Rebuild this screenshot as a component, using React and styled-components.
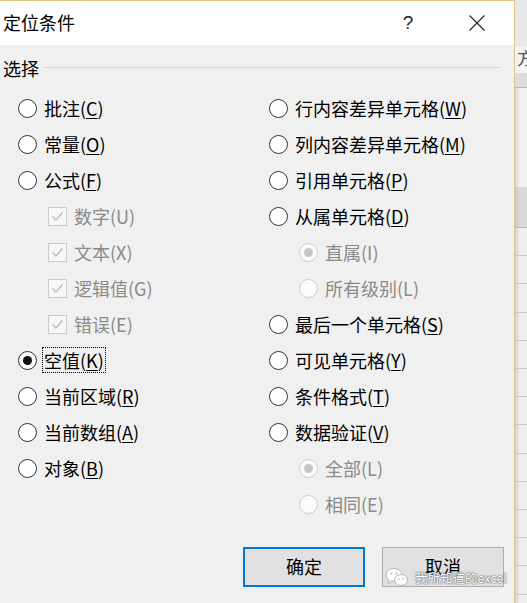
import React from "react";
import styled, { createGlobalStyle } from "styled-components";

const GlobalStyle = createGlobalStyle`
  html, body {
    margin: 0;
    padding: 0;
    background: #f0f0f0;
    font-family: "Noto Sans CJK SC", "Noto Sans", sans-serif;
  }
`;

const leftItems = [
  { label: "批注", key: "C" },
  { label: "常量", key: "O" },
  { label: "公式", key: "F" },
  { label: "数字", key: "U", sub: "check" },
  { label: "文本", key: "X", sub: "check" },
  { label: "逻辑值", key: "G", sub: "check" },
  { label: "错误", key: "E", sub: "check" },
  { label: "空值", key: "K", checked: true, focus: true },
  { label: "当前区域", key: "R" },
  { label: "当前数组", key: "A" },
  { label: "对象", key: "B" },
];

const rightItems = [
  { label: "行内容差异单元格", key: "W" },
  { label: "列内容差异单元格", key: "M" },
  { label: "引用单元格", key: "P" },
  { label: "从属单元格", key: "D" },
  { label: "直属", key: "I", sub: "radio", checked: true },
  { label: "所有级别", key: "L", sub: "radio" },
  { label: "最后一个单元格", key: "S" },
  { label: "可见单元格", key: "Y" },
  { label: "条件格式", key: "T" },
  { label: "数据验证", key: "V" },
  { label: "全部", key: "L", sub: "radio", checked: true },
  { label: "相同", key: "E", sub: "radio" },
];

function Option({ item }) {
  const disabled = !!item.sub;
  return (
    <Row $indent={disabled}>
      {item.sub === "check" ? (
        <CheckBox>
          <svg width="17" height="17" viewBox="0 0 17 17">
            <path d="M3.5 8.5 L7 12 L13.5 4.5" fill="none" stroke="#bdbdbd" strokeWidth="1.4" />
          </svg>
        </CheckBox>
      ) : (
        <Radio $disabled={disabled}>{item.checked && <Dot $disabled={disabled} />}</Radio>
      )}
      <Label $disabled={disabled} $focus={item.focus}>
        {item.label}(
        {disabled ? item.key : <u>{item.key}</u>})
      </Label>
    </Row>
  );
}

function WeChatMark() {
  return (
    <Watermark>
      <svg width="24" height="21" viewBox="0 0 24 21">
        <ellipse cx="9" cy="8" rx="8" ry="6.5" fill="#fff" stroke="#b5b5b5" strokeWidth="1" />
        <path d="M4 13 L3 16.5 L7.5 14" fill="#fff" stroke="#b5b5b5" strokeWidth="1" />
        <ellipse cx="16" cy="13" rx="6.5" ry="5.5" fill="#fff" stroke="#b5b5b5" strokeWidth="1" />
        <path d="M19.5 17.5 L21 20 L17 18.3" fill="#fff" stroke="#b5b5b5" strokeWidth="1" />
        <circle cx="6.5" cy="6.5" r="1" fill="#b5b5b5" />
        <circle cx="11.5" cy="6.5" r="1" fill="#b5b5b5" />
        <circle cx="14" cy="12" r="0.8" fill="#b5b5b5" />
        <circle cx="18" cy="12" r="0.8" fill="#b5b5b5" />
      </svg>
      <span>我所知道的excel</span>
    </Watermark>
  );
}

export default function App() {
  return (
    <>
      <GlobalStyle />
      <Screen>
        <Dialog>
          <TitleBar>
            <Title>定位条件</Title>
            <Help>?</Help>
            <Close>
              <svg width="16" height="16" viewBox="0 0 16 16">
                <path d="M0.5 0.5 L15.5 15.5 M15.5 0.5 L0.5 15.5" stroke="#222" strokeWidth="1.1" />
              </svg>
            </Close>
          </TitleBar>
          <Body>
            <Legend>
              <span>选择</span>
              <Rule />
            </Legend>
            <Columns>
              <Column>
                {leftItems.map((it, i) => (
                  <Option key={i} item={it} />
                ))}
              </Column>
              <Column>
                {rightItems.map((it, i) => (
                  <Option key={i} item={it} />
                ))}
              </Column>
            </Columns>
            <Buttons>
              <Button $primary>确定</Button>
              <Button>取消</Button>
            </Buttons>
          </Body>
          <WeChatMark />
        </Dialog>
        <Strip>
          <StripTop />
          <Ribbon>方</Ribbon>
          <RibbonEdge />
          <StripPlain />
          <StripHeader />
          <StripGrid />
        </Strip>
      </Screen>
    </>
  );
}

const Screen = styled.div`
  display: flex;
  width: 527px;
  height: 603px;
  overflow: hidden;
`;

const Dialog = styled.div`
  position: relative;
  width: 514px;
  flex: none;
  border-top: 1px solid #e4c382;
  border-right: 1px solid #e4c382;
  background: #f0f0f0;
  display: flex;
  flex-direction: column;
`;

const TitleBar = styled.div`
  height: 44px;
  background: #fff;
  display: flex;
  align-items: center;
  padding: 0 14px 0 3px;
`;

const Title = styled.div`
  flex: 1;
  font-size: 18px;
  color: #000;
  margin-top: -2px;
`;

const Help = styled.div`
  width: 46px;
  margin-right: 23px;
  text-align: center;
  font-family: "Liberation Sans", sans-serif;
  font-size: 19px;
  color: #222;
`;

const Close = styled.div`
  width: 46px;
  display: flex;
  justify-content: center;
  margin-top: -1px;
`;

const Body = styled.div`
  flex: 1;
  display: flex;
  flex-direction: column;
`;

const Legend = styled.div`
  height: 46px;
  display: flex;
  align-items: center;
  padding: 0 14px 0 3px;
  font-size: 18px;
  color: #000;
  gap: 5px;
`;

const Rule = styled.div`
  flex: 1;
  height: 1px;
  background: #d5d5d5;
  margin-top: -2px;
`;

const Columns = styled.div`
  display: grid;
  grid-template-columns: 251px 1fr;
  padding-left: 18px;
  margin-top: -1px;
`;

const Column = styled.div`
  display: flex;
  flex-direction: column;
`;

const Row = styled.div`
  height: 36px;
  display: flex;
  align-items: center;
  padding-left: ${(p) => (p.$indent ? "30px" : "0")};
`;

const Radio = styled.div`
  width: 19px;
  height: 19px;
  box-sizing: border-box;
  border-radius: 50%;
  border: 1.4px solid ${(p) => (p.$disabled ? "#cfcfcf" : "#333")};
  background: ${(p) => (p.$disabled ? "#fbfbfb" : "#fff")};
  display: flex;
  align-items: center;
  justify-content: center;
  flex: none;
`;

const Dot = styled.div`
  width: 9px;
  height: 9px;
  border-radius: 50%;
  background: ${(p) => (p.$disabled ? "#c6c6c6" : "#111")};
`;

const CheckBox = styled.div`
  width: 19px;
  height: 19px;
  box-sizing: border-box;
  border: 1px solid #cccccc;
  background: #f7f7f7;
  display: flex;
  align-items: center;
  justify-content: center;
  flex: none;
`;

const Label = styled.div`
  margin-left: 6px;
  padding: 0 1px;
  font-size: 18px;
  line-height: 24px;
  white-space: nowrap;
  color: ${(p) => (p.$disabled ? "#8a8a8a" : "#000")};
  outline: ${(p) => (p.$focus ? "1px dotted #000" : "none")};
  outline-offset: 0px;

  u {
    text-decoration-thickness: 1px;
    text-underline-offset: 2px;
  }
`;

const Buttons = styled.div`
  display: flex;
  justify-content: flex-end;
  gap: 17px;
  padding-right: 10px;
  margin-top: 25px;
`;

const Button = styled.div`
  width: 122px;
  height: 40px;
  box-sizing: border-box;
  display: flex;
  align-items: center;
  justify-content: center;
  background: #e1e1e1;
  border: ${(p) => (p.$primary ? "2px solid #0078d7" : "1px solid #adadad")};
  font-size: 18px;
  color: #000;
  padding-bottom: 2px;
`;

const Watermark = styled.div`
  position: absolute;
  left: 385px;
  top: 566px;
  display: flex;
  align-items: center;
  gap: 6px;
  font-size: 12.5px;
  color: #fff;
  text-shadow: 0 0 1px #666, 0 0 1px #666, 0 0 2px #888;
`;

const Strip = styled.div`
  flex: 1;
  display: flex;
  flex-direction: column;
  overflow: hidden;
  background: linear-gradient(to right, #cfcfcf, #e6e6e6 5px, #eeeeee);
`;

const StripTop = styled.div`
  height: 46px;
  background: #e8e8e8;
`;

const Ribbon = styled.div`
  height: 27px;
  padding-left: 2px;
  font-size: 17px;
  line-height: 24px;
  color: #555;
  background: #f3f3f3;
  white-space: nowrap;
`;

const RibbonEdge = styled.div`
  height: 14px;
  background: #dcdcdc;
  border-bottom: 1px solid #b9b9b9;
`;

const StripPlain = styled.div`
  height: 99px;
  background: linear-gradient(to right, #d5d5d5, #f1f1f1 5px);
`;

const StripHeader = styled.div`
  height: 40px;
  background: linear-gradient(to right, #c8c8c8, #dadada 5px);
  border-bottom: 1px solid #b5b5b5;
`;

const StripGrid = styled.div`
  flex: 1;
  background:
    repeating-linear-gradient(to bottom, transparent 0, transparent 27.2px, #c9c9c9 27.2px, #c9c9c9 28.2px),
    linear-gradient(to right, #d2d2d2, #efefef 5px);
`;
